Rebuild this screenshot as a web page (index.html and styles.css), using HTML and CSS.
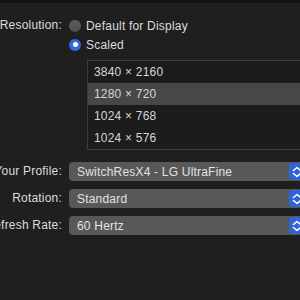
FILE: index.html
```html
<!DOCTYPE html>
<html lang="en">
<head>
    <meta charset="UTF-8">
    <meta name="viewport" content="width=device-width, initial-scale=1.0">
    <title>Display Settings</title>
    <link rel="stylesheet" href="styles.css">
</head>
<body>
    <div class="topbar"></div>
    <div class="settings">
        <div class="label">Resolution:</div>
        <div class="res-block">
            <div class="radio"><span class="dot"></span>Default for Display</div>
            <div class="radio"><span class="dot on"></span>Scaled</div>
            <ul class="res-list">
                <li>3840 × 2160</li>
                <li class="selected">1280 × 720</li>
                <li>1024 × 768</li>
                <li>1024 × 576</li>
            </ul>
        </div>

        <div class="label">Your Profile:</div>
        <div class="popup">SwitchResX4 - LG UltraFine<span class="stepper"><svg width="16" height="16" viewBox="0 0 16 16"><path d="M4.5 6.5 L8 3.5 L11.5 6.5 M4.5 9.5 L8 12.5 L11.5 9.5" fill="none" stroke="#fff" stroke-width="1.6" stroke-linecap="round" stroke-linejoin="round"/></svg></span></div>

        <div class="label">Rotation:</div>
        <div class="popup">Standard<span class="stepper"><svg width="16" height="16" viewBox="0 0 16 16"><path d="M4.5 6.5 L8 3.5 L11.5 6.5 M4.5 9.5 L8 12.5 L11.5 9.5" fill="none" stroke="#fff" stroke-width="1.6" stroke-linecap="round" stroke-linejoin="round"/></svg></span></div>

        <div class="label">Refresh Rate:</div>
        <div class="popup">60 Hertz<span class="stepper"><svg width="16" height="16" viewBox="0 0 16 16"><path d="M4.5 6.5 L8 3.5 L11.5 6.5 M4.5 9.5 L8 12.5 L11.5 9.5" fill="none" stroke="#fff" stroke-width="1.6" stroke-linecap="round" stroke-linejoin="round"/></svg></span></div>
    </div>
</body>
</html>
```

FILE: styles.css
```css
html, body {
    margin: 0;
    height: 100%;
    overflow: hidden;
    background-color: #1f1f1f;
}
body {
    font-family: "Liberation Sans", Arial, sans-serif;
    font-size: 12px;
    letter-spacing: 0.2px;
    color: #dcdcdc;
}
.topbar {
    height: 3px;
    background-color: #141414;
}
.settings {
    display: grid;
    grid-template-columns: 80px 240px;
    column-gap: 7px;
    row-gap: 8px;
    margin-left: -18px;
    padding-top: 13px;
}
.label {
    text-align: right;
    white-space: nowrap;
    line-height: 19px;
}
.res-block {
    margin-bottom: 4px;
}
.radio {
    display: flex;
    align-items: center;
    gap: 5px;
    height: 19px;
    white-space: nowrap;
}
.dot {
    width: 12px;
    height: 12px;
    border-radius: 50%;
    background: linear-gradient(#5e5e5e, #4e4e4e);
    display: flex;
    align-items: center;
    justify-content: center;
}
.dot.on {
    background: #2f6ae0;
}
.dot.on::after {
    content: "";
    width: 5px;
    height: 5px;
    border-radius: 50%;
    background: #fff;
}
.res-list {
    list-style: none;
    margin: 6px 0 0 18px;
    padding: 0;
    border: 1px solid #3c3c3c;
    background-color: #1c1c1c;
}
.res-list li {
    height: 22px;
    line-height: 22px;
    padding-left: 6px;
    color: #d6d6d6;
}
.res-list li.selected {
    background-color: #474747;
}
.popup {
    display: flex;
    align-items: center;
    justify-content: space-between;
    height: 19px;
    padding-left: 8px;
    padding-right: 1px;
    border-radius: 4px;
    background-color: #585858;
    color: #e2e2e2;
    white-space: nowrap;
}
.stepper {
    display: flex;
    align-items: center;
    justify-content: center;
    width: 16px;
    height: 17px;
    margin-right: 3px;
    border-radius: 4px;
    background-color: #2f64d8;
}
```
